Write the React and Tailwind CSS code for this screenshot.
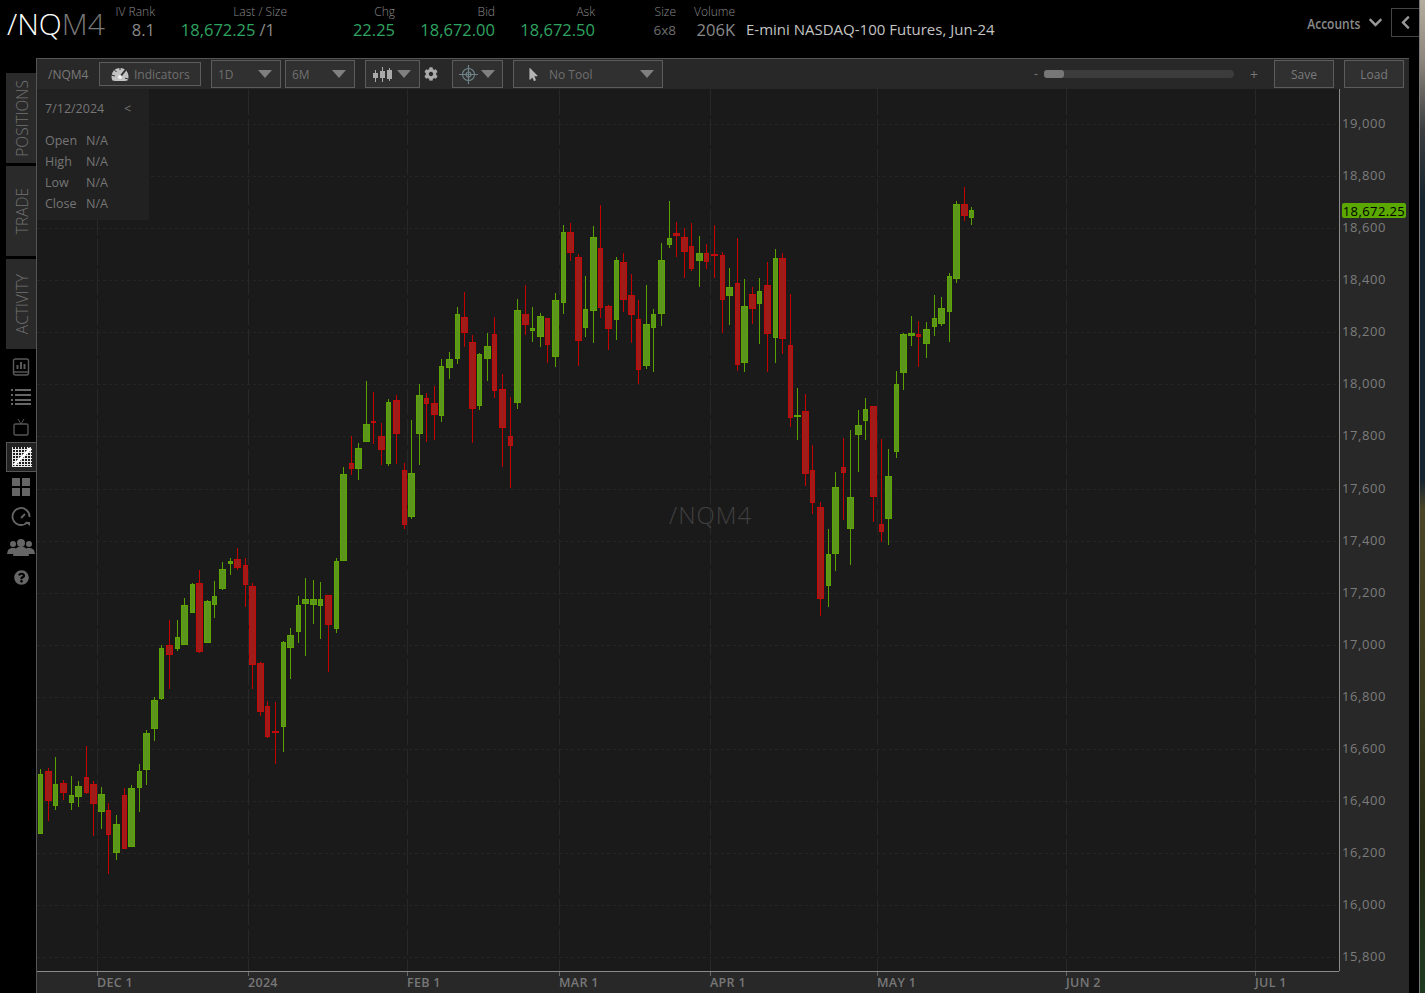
import { FaChevronDown, FaChevronLeft, FaCog, FaMousePointer, FaQuestionCircle } from "react-icons/fa";

const FONT = "font-['Open_Sans','Noto_Sans',sans-serif]";

// x, body width, wick top, wick bottom, body top, body bottom
const candles = [
  ["g", 40, 5, 769, 834, 774, 834], ["r", 48, 7, 768, 821, 771, 801], ["g", 55, 5, 757, 810, 784, 806],
  ["r", 63, 7, 780, 800, 783, 793], ["g", 71, 5, 776, 810, 795, 803], ["g", 78, 7, 781, 807, 786, 797],
  ["r", 86, 5, 746, 794, 777, 793], ["r", 93, 7, 781, 836, 784, 804], ["g", 101, 7, 787, 829, 794, 812],
  ["r", 108, 5, 803, 874, 810, 835], ["g", 116, 7, 815, 860, 824, 853], ["r", 124, 5, 788, 849, 795, 849],
  ["g", 131, 7, 785, 847, 788, 847], ["g", 139, 5, 764, 812, 771, 788], ["g", 146, 7, 730, 785, 733, 770],
  ["g", 154, 7, 697, 741, 700, 729], ["g", 161, 5, 645, 700, 648, 699], ["r", 169, 7, 620, 689, 645, 655],
  ["g", 177, 5, 620, 651, 637, 649], ["g", 184, 7, 598, 645, 605, 645], ["g", 192, 5, 583, 613, 584, 613],
  ["r", 199, 7, 570, 653, 583, 652], ["g", 207, 7, 600, 643, 601, 643], ["g", 214, 5, 581, 618, 596, 605],
  ["g", 222, 7, 562, 590, 569, 589], ["g", 230, 5, 558, 575, 561, 564], ["r", 237, 7, 548, 570, 559, 568],
  ["r", 245, 5, 558, 607, 565, 585], ["r", 252, 7, 583, 689, 586, 665], ["r", 260, 7, 662, 716, 663, 712],
  ["r", 267, 5, 701, 738, 706, 737], ["r", 275, 7, 702, 764, 731, 733], ["g", 283, 5, 641, 752, 642, 727],
  ["g", 290, 7, 628, 679, 635, 648], ["g", 298, 5, 596, 643, 605, 632], ["g", 305, 7, 578, 656, 599, 604],
  ["g", 313, 7, 580, 624, 599, 605], ["g", 320, 5, 582, 639, 599, 606], ["r", 328, 7, 595, 672, 595, 625],
  ["g", 336, 5, 558, 633, 561, 629], ["g", 343, 7, 467, 561, 474, 561], ["r", 351, 5, 436, 475, 463, 469],
  ["g", 358, 7, 443, 480, 448, 469], ["g", 366, 7, 381, 442, 424, 442], ["r", 373, 5, 392, 444, 421, 423],
  ["r", 381, 7, 423, 465, 436, 450], ["g", 388, 5, 399, 466, 402, 464], ["r", 396, 7, 395, 464, 400, 434],
  ["r", 404, 5, 463, 529, 470, 525], ["g", 411, 7, 420, 519, 473, 517], ["g", 419, 7, 384, 465, 395, 434],
  ["r", 426, 5, 393, 442, 398, 404], ["r", 434, 7, 386, 440, 403, 415], ["g", 441, 5, 359, 422, 366, 416],
  ["g", 449, 7, 352, 379, 359, 368], ["g", 457, 5, 307, 364, 314, 359], ["r", 464, 7, 292, 347, 317, 333],
  ["r", 472, 7, 335, 443, 342, 409], ["g", 479, 5, 353, 410, 354, 406], ["g", 487, 7, 333, 381, 346, 359],
  ["r", 494, 5, 317, 398, 334, 391], ["r", 502, 7, 374, 467, 389, 428], ["r", 510, 5, 397, 488, 436, 446],
  ["g", 517, 7, 299, 409, 310, 403], ["r", 525, 7, 285, 335, 314, 325], ["g", 532, 5, 307, 342, 328, 331],
  ["g", 540, 7, 313, 347, 316, 337], ["r", 547, 5, 318, 363, 318, 345], ["g", 555, 7, 293, 367, 300, 357],
  ["g", 563, 5, 225, 314, 232, 303], ["r", 570, 7, 223, 261, 232, 253], ["r", 578, 7, 254, 366, 257, 341],
  ["g", 585, 5, 276, 337, 309, 328], ["g", 593, 7, 226, 343, 237, 311], ["r", 600, 5, 205, 318, 248, 308],
  ["r", 608, 7, 305, 350, 306, 329], ["g", 616, 5, 257, 340, 260, 320], ["r", 623, 7, 253, 312, 262, 300],
  ["r", 631, 7, 274, 343, 295, 315], ["r", 638, 5, 300, 384, 319, 370], ["g", 646, 7, 285, 369, 324, 366],
  ["g", 653, 5, 309, 372, 314, 328], ["g", 661, 7, 243, 326, 260, 314], ["g", 669, 5, 201, 248, 238, 245],
  ["r", 676, 7, 222, 257, 233, 236], ["r", 684, 7, 228, 278, 237, 252], ["r", 691, 5, 223, 271, 246, 269],
  ["g", 699, 7, 236, 287, 253, 261], ["r", 706, 5, 244, 269, 253, 262], ["r", 714, 7, 225, 278, 254, 256],
  ["r", 722, 5, 252, 333, 255, 300], ["g", 729, 7, 268, 325, 287, 296], ["r", 737, 5, 238, 371, 283, 365],
  ["g", 744, 7, 279, 372, 306, 363], ["r", 752, 7, 287, 324, 294, 309], ["g", 759, 5, 278, 344, 291, 304],
  ["r", 767, 7, 262, 372, 285, 334], ["g", 775, 5, 249, 363, 258, 338], ["r", 782, 7, 253, 354, 258, 339],
  ["r", 790, 5, 294, 427, 345, 418], ["g", 797, 7, 388, 440, 415, 417], ["r", 805, 7, 394, 486, 411, 474],
  ["r", 812, 5, 445, 514, 470, 503], ["r", 820, 7, 502, 616, 507, 599], ["g", 828, 5, 529, 607, 554, 586],
  ["g", 835, 7, 472, 571, 487, 554], ["r", 843, 5, 438, 520, 467, 473], ["g", 850, 7, 430, 565, 497, 529],
  ["g", 858, 7, 410, 472, 425, 435], ["g", 865, 5, 398, 440, 409, 421], ["r", 873, 7, 406, 522, 406, 497],
  ["r", 881, 5, 439, 542, 524, 532], ["g", 888, 7, 449, 545, 476, 519], ["g", 896, 5, 371, 458, 384, 452],
  ["g", 903, 7, 333, 390, 334, 373], ["g", 911, 7, 316, 346, 333, 336], ["r", 918, 5, 321, 367, 334, 337],
  ["g", 926, 7, 322, 358, 329, 344], ["g", 934, 5, 295, 336, 318, 327], ["g", 941, 7, 297, 326, 308, 324],
  ["g", 949, 5, 273, 342, 276, 312], ["g", 956, 7, 201, 283, 204, 279], ["r", 964, 7, 187, 221, 204, 216],
  ["g", 971, 5, 207, 225, 210, 218],
];

const prices = ["19,000", "18,800", "18,600", "18,400", "18,200", "18,000", "17,800", "17,600", "17,400", "17,200", "17,000", "16,800", "16,600", "16,400", "16,200", "16,000", "15,800"];
const vLines = [97, 248, 407, 559, 710, 877, 1066, 1255];
const dates = [["DEC 1", "w-[151px]"], ["2024", "w-[159px]"], ["FEB 1", "w-[152px]"], ["MAR 1", "w-[151px]"], ["APR 1", "w-[167px]"], ["MAY 1", "w-[189px]"], ["JUN 2", "w-[189px]"], ["JUL 1", "w-[84px]"]];

function Caret() {
  return <span className="block w-0 h-0 border-x-[7px] border-t-[8px] border-x-transparent border-t-[#808080]" />;
}

function Quote({ label, value, className, valueClass = "text-[16.5px] text-[#8a8a8a]" }) {
  return (
    <div className={`flex flex-col items-end mt-[4px] ${className}`}>
      <span className="text-[12px] leading-4 font-light text-[#8a8a8a]">{label}</span>
      <span className={`leading-[22px] -mt-[1px] ${valueClass}`}>{value}</span>
    </div>
  );
}

function Select({ label, className, children }) {
  return (
    <div className={`h-[28px] flex items-center justify-between border border-[#5c5c5c] bg-[#303030] text-[12px] text-[#6f6f6f] ${className}`}>
      {label && <span className="pt-[1px]">{label}</span>}
      {children}
      <Caret />
    </div>
  );
}

function Plot() {
  return (
    <svg className="block flex-1 h-[882px]" viewBox="37 89 1302 882" shapeRendering="crispEdges">
      <rect x="37" y="89" width="1302" height="882" fill="#1a1a1a" />
      {prices.map((p, i) => (
        <line key={p} x1="37" x2="1339" y1={124.5 + Math.round(i * 52.08)} y2={124.5 + Math.round(i * 52.08)} stroke="#252525" strokeDasharray="3 3" />
      ))}
      {vLines.map((x) => (
        <line key={x} x1={x + 0.5} x2={x + 0.5} y1="89" y2="971" stroke="#282828" strokeDasharray="26 4" />
      ))}
      {candles.map(([c, x, w, wt, wb, bt, bb]) => {
        const up = c === "g";
        const left = w === 5 ? x - 2 : x - 3;
        return (
          <g key={x}>
            <rect x={x} y={wt} width="1" height={wb - wt} fill={up ? "#5aa000" : "#c40000"} />
            <rect x={left} y={bt} width={w} height={bb - bt} fill={up ? "#5fa502" : "#c20a0a"} />
            {bb - bt > 2 && <rect x={left + 1} y={bt + 1} width={w - 2} height={bb - bt - 2} fill={up ? "#5b951b" : "#9e1d18"} />}
          </g>
        );
      })}
    </svg>
  );
}

function SideIcon({ active, children }) {
  return (
    <div className={`h-[30px] flex items-center justify-center text-[#666] ${active ? "bg-[#222] border-y border-l border-[#555] -mr-[1px]" : ""}`}>
      {children}
    </div>
  );
}

function Tab({ label, className }) {
  return (
    <div className={`${className} w-[30px] pl-[3px] bg-[#2a2a2a] flex items-center justify-center`}>
      <span className="[writing-mode:vertical-rl] rotate-180 text-[15.5px] font-light text-[#727272] leading-none">{label}</span>
    </div>
  );
}

export default function App() {
  return (
    <div className={`w-[1425px] h-[993px] overflow-hidden flex bg-black ${FONT}`}>
      <div className="w-[1419px] flex flex-col">
        {/* quote header */}
        <div className="h-[58px] flex items-start">
          <div className="ml-[7px] mt-[4px] w-[107px] text-[30px] leading-10 font-light">
            <span className="text-white">/NQ</span>
            <span className="text-[#777]">M4</span>
          </div>
          <Quote label="IV Rank" value="8.1" className="w-[41px]" />
          <Quote
            label="Last / Size"
            value={<span className="mr-[12px]"><span className="text-[#2fa462]">18,672.25</span><span className="text-[#8a8a8a] ml-[4px]">/1</span></span>}
            className="w-[121px] ml-[11px]"
          />
          <Quote label="Chg" value="22.25" className="w-[108px]" valueClass="text-[16.5px] text-[#2fa462]" />
          <Quote label="Bid" value="18,672.00" className="w-[100px]" valueClass="text-[16.5px] text-[#2fa462]" />
          <Quote label="Ask" value="18,672.50" className="w-[100px]" valueClass="text-[16.5px] text-[#2fa462]" />
          <Quote label="Size" value="6x8" className="w-[81px]" valueClass="text-[13.5px] text-[#6f6f6f]" />
          <Quote label="Volume" value="206K" className="w-[59px]" />
          <div className="ml-[11px] mt-[19px] text-[15px] leading-[20px] text-[#c4c4c4]">E-mini NASDAQ-100 Futures, Jun-24</div>
          <div className="ml-auto mt-[8px] h-[29px] flex items-center">
            <span className="mt-[2px] -mr-[1px] origin-right scale-x-[0.8] font-semibold text-[15px] text-[#8a8a8a]">Accounts</span>
            <FaChevronDown className="ml-[9px] text-[#999] text-[15px]" />
            <div className="ml-[8px] w-[28px] h-[29px] border border-r-0 border-[#444] flex items-center justify-center">
              <FaChevronLeft className="text-[#999] text-[15px]" />
            </div>
          </div>
        </div>

        <div className="flex flex-1">
          {/* left rail */}
          <div className="w-[36px] pl-[6px] pt-[15px] flex flex-col">
            <Tab className="h-[90px]" label="POSITIONS" />
            <Tab className="h-[90px] mt-[3px]" label="TRADE" />
            <Tab className="h-[90px] mt-[3px]" label="ACTIVITY" />
            <div className="mt-[3px]">
              <SideIcon>
                <svg width="18" height="18" viewBox="0 0 18 18" fill="none" stroke="#5a5a5a" strokeWidth="1.4"><rect x="1.5" y="1" width="15" height="16" rx="2" /><path d="M2 14h14" /><path d="M5.5 7v4M9 4v7M12.5 6v5" strokeWidth="2" /></svg>
              </SideIcon>
              <SideIcon>
                <svg width="20" height="16" viewBox="0 0 20 16" fill="#666" shapeRendering="crispEdges">
                  <path d="M0 0h2v2H0zM4 0h16v2H4zM0 5h2v2H0zM4 5h16v2H4zM0 10h2v2H0zM4 10h16v2H4zM0 14h2v2H0zM4 14h16v2H4z" />
                </svg>
              </SideIcon>
              <SideIcon>
                <svg width="18" height="19" viewBox="0 0 18 19" fill="none" stroke="#555" strokeWidth="1.4"><rect x="2" y="6" width="14" height="11" rx="1.5" /><path d="M6 1l3 5 3-5" strokeWidth="1" /></svg>
              </SideIcon>
              <SideIcon active>
                <svg width="20" height="20" viewBox="0 0 20 20">
                  <rect width="20" height="20" fill="#1c1c1c" />
                  <path d="M.5 0v20M3.5 0v20M6.5 0v20M9.5 0v20M12.5 0v20M15.5 0v20M18.5 0v20M0 2.5h20M0 5.5h20M0 8.5h20M0 11.5h20M0 14.5h20M0 17.5h20M0 19.5h20" stroke="#e8e8e8" strokeWidth="1" shapeRendering="crispEdges" />
                  <path d="M2 18L17 3" stroke="#fff" strokeWidth="2.5" />
                  <circle cx="17.5" cy="2.5" r="2" fill="#fff" />
                </svg>
              </SideIcon>
              <SideIcon>
                <div className="grid grid-cols-2 gap-[2px]">
                  <div className="w-[8px] h-[8px] bg-[#666]" /><div className="w-[8px] h-[8px] bg-[#666]" />
                  <div className="w-[8px] h-[8px] bg-[#666]" /><div className="w-[8px] h-[8px] bg-[#666]" />
                </div>
              </SideIcon>
              <SideIcon>
                <svg width="20" height="20" viewBox="0 0 20 20" fill="none" stroke="#666" strokeWidth="1.8"><path d="M16.5 15A8.5 8.5 0 1 1 18.5 10" /><path d="M10 11l4-4" /><path d="M14 15h5v4z" fill="#666" stroke="none" /></svg>
              </SideIcon>
              <SideIcon>
                <svg className="-ml-[1px]" width="28" height="17" viewBox="0 0 28 17" fill="#666">
                  <circle cx="6" cy="5" r="3" /><circle cx="22" cy="5" r="3" />
                  <path d="M0 15l1-4 3-2h4l1 1-2 5zM28 15l-1-4-3-2h-4l-1 1 2 5z" />
                  <circle cx="14" cy="4" r="4" />
                  <path d="M6 17l1-6 4-3h6l4 3 1 6z" />
                </svg>
              </SideIcon>
              <SideIcon><FaQuestionCircle className="text-[15px]" /></SideIcon>
            </div>
          </div>

          {/* chart panel */}
          <div className="w-[1373px] h-[935px] flex flex-col bg-[#282828] border-t border-l border-[#555] relative">
            <div className="h-[30px] shrink-0 flex items-center pr-[5px]">
              <span className="ml-[11px] w-[51px] pt-[1px] text-[12px] text-[#7a7a7a]">/NQM4</span>
              <div className="w-[102px] h-[24px] flex items-center border border-[#5c5c5c] bg-[#2f2f2f] text-[12px] text-[#6f6f6f]">
                <svg className="ml-[11px] mr-[5px]" width="18" height="16" viewBox="0 0 18 16">
                  <path d="M1.5 14.5A8.5 8.5 0 1 1 16.5 14.5L14 15H4z" fill="#c2c2c2" />
                  <path d="M9 11L16 2" stroke="#2f2f2f" strokeWidth="2" />
                  <path d="M0 9l4 1M2.5 3l3 3M9 0v4M14 12l3 1" stroke="#2f2f2f" strokeWidth="1" />
                  <circle cx="9" cy="11" r="2" fill="#f0f0f0" />
                </svg>
                <span className="pt-[1px]">Indicators</span>
              </div>
              <Select label="1D" className="w-[70px] ml-[10px] pl-[6px] pr-[8px]" />
              <Select label="6M" className="w-[70px] ml-[4px] pl-[6px] pr-[8px]" />
              <Select className="w-[55px] ml-[10px] pl-[7px] pr-[8px]">
                <svg width="19" height="15" viewBox="0 0 19 15" shapeRendering="crispEdges"><path d="M2 3h1v12H2zM9 0h1v15H9zM16 1h1v13h-1z" fill="#aaa" /><path d="M0 6h5v5H0zM7 4h5v7H7zM14 3h5v9h-5z" fill="#aaa" /></svg>
              </Select>
              <FaCog className="ml-[4px] text-[14px] text-[#aaa]" />
              <Select className="w-[51px] ml-[14px] pl-[6px] pr-[7px]">
                <svg width="19" height="19" viewBox="0 0 19 19" fill="none" stroke="#6d8086" strokeWidth="1.2"><circle cx="9.5" cy="9.5" r="6" /><circle cx="9.5" cy="9.5" r="2.5" /><path d="M9.5 0v19M0 9.5h19" /></svg>
              </Select>
              <Select className="w-[150px] ml-[10px] pl-[13px] pr-[8px]">
                <span className="flex items-center">
                  <FaMousePointer className="text-[13px] text-[#b5b5b5]" />
                  <span className="ml-[9px] pt-[1px]">No Tool</span>
                </span>
              </Select>
              <span className="ml-auto text-[12px] text-[#777]">-</span>
              <div className="ml-[6px] w-[190px] h-[8px] bg-[#3c3c3c] rounded-[4px]">
                <div className="w-[20px] h-[8px] bg-[#777] rounded-[3px]" />
              </div>
              <span className="ml-[16px] text-[14px] text-[#777]">+</span>
              <div className="ml-[16px] w-[60px] h-[28px] pt-[1px] flex items-center justify-center border border-[#5c5c5c] bg-[#303030] text-[12px] text-[#7a7a7a]">Save</div>
              <div className="ml-[10px] w-[60px] h-[28px] pt-[1px] flex items-center justify-center border border-[#5c5c5c] bg-[#303030] text-[12px] text-[#7a7a7a]">Load</div>
            </div>

            <div className="flex relative h-[882px] shrink-0">
              <Plot />
              <div className="w-[70px] h-[882px] overflow-hidden border-l border-[#8a8a8a] pt-[23px] pl-[2px] flex flex-col">
                {prices.map((p) => (
                  <span key={p} className="h-[52.08px] shrink-0 leading-[22px] text-[13px] tracking-[0.6px] text-[#7c7c7c]">{p}</span>
                ))}
              </div>
              {/* last price tag */}
              <div className="absolute left-[1305px] top-[114px] w-[64px] h-[15px] pt-[2px] flex items-center justify-center rounded-[2px] bg-[#5aa800] text-[13px] tracking-[0.4px] text-black">18,672.25</div>
              {/* OHLC box */}
              <div className="absolute left-0 top-0 w-[112px] h-[131px] bg-[#212121] pl-[8px] text-[12.5px] text-[#767676]">
                <div className="flex mt-[12px] h-[16px] items-center">
                  <span className="w-[79px]">7/12/2024</span><span>&lt;</span>
                </div>
                <div className="mt-[14px] flex flex-col">
                  {["Open", "High", "Low", "Close"].map((k) => (
                    <div key={k} className="flex h-[21px] items-center">
                      <span className="w-[41px]">{k}</span><span>N/A</span>
                    </div>
                  ))}
                </div>
              </div>
              {/* watermark */}
              <div className="absolute left-[632px] top-[410px] text-[24px] leading-8 tracking-[1px] font-light text-[#404040]">/NQM4</div>
            </div>

            <div className="flex-1 border-t border-[#8a8a8a] flex w-[1302px] pl-[60px]">
              {dates.map(([d, w]) => (
                <div key={d} className={`${w} relative pt-[3px] text-[12.5px] leading-4 font-semibold tracking-[0.3px] text-[#777]`}>
                  <span className="absolute left-0 top-0 w-[1px] h-[4px] bg-[#666]" />
                  {d}
                </div>
              ))}
            </div>
          </div>
        </div>
      </div>
      <div className="w-[6px] h-full border-l border-[#777] bg-[linear-gradient(180deg,#b5ad9f_0px,#8d867c_60px,#3a3d40_130px,#15242e_200px,#162430_480px,#4a4424_510px,#3a3a1c_700px,#252a14_850px,#1d3a20_993px)]" />
    </div>
  );
}
